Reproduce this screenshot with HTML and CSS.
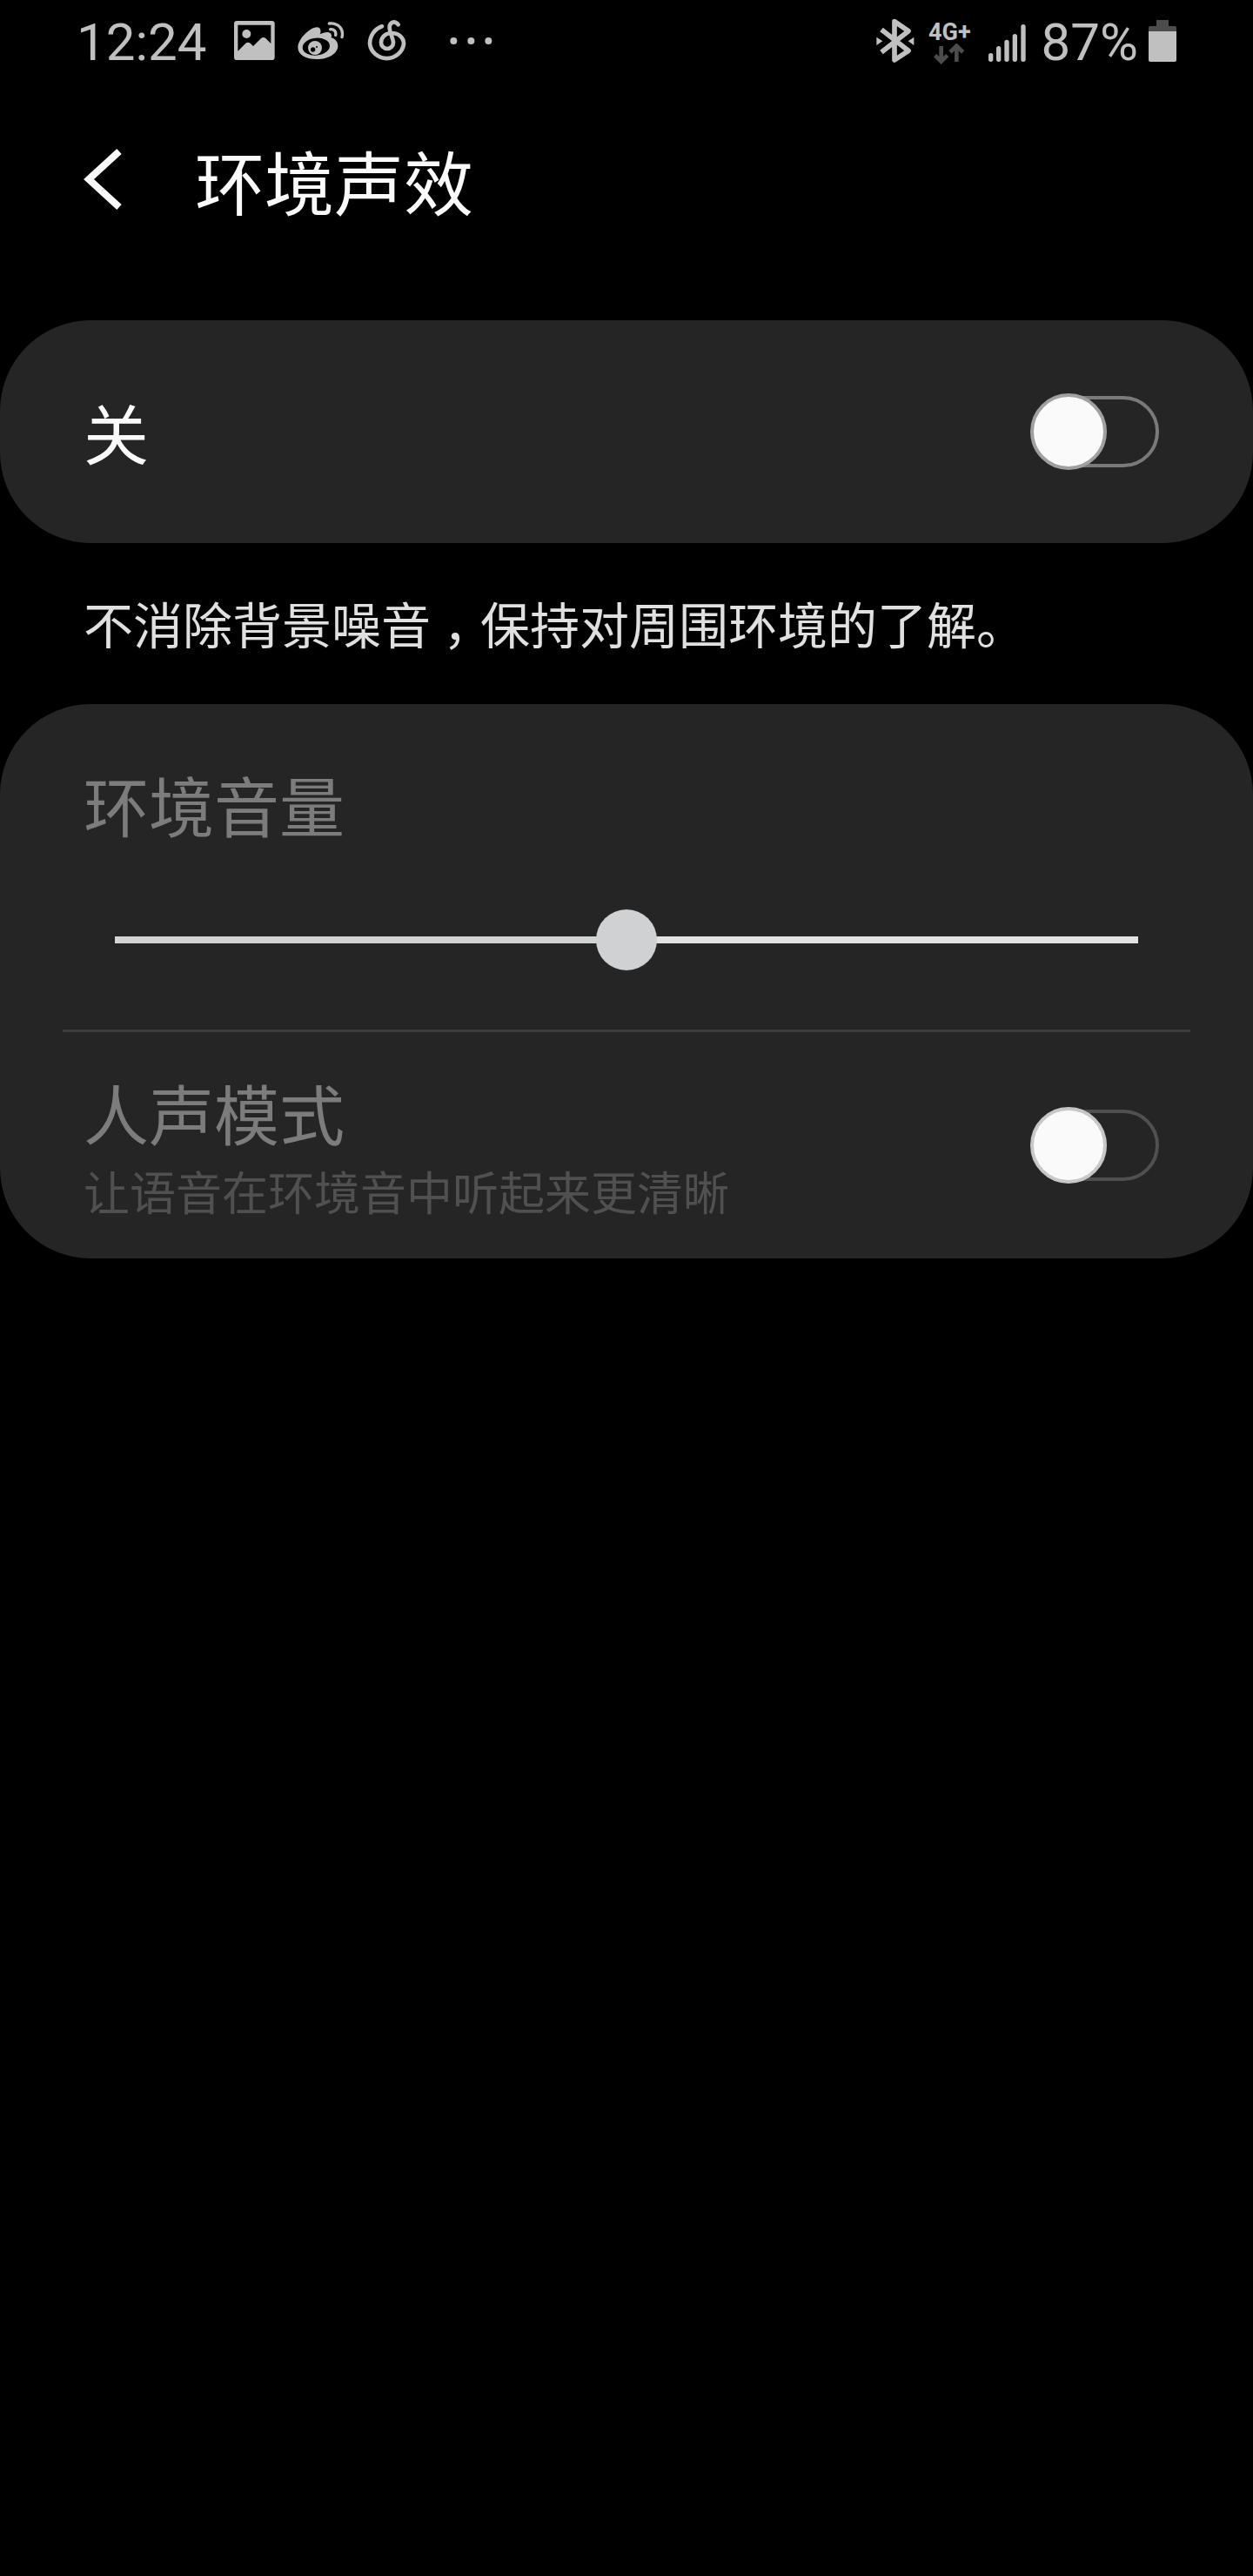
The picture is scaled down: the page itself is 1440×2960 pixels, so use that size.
FILE: index.html
```html
<!DOCTYPE html>
<html lang="zh-CN">

<head>
    <meta charset="UTF-8" />
    <meta name="viewport" content="width=device-width, initial-scale=1.0" />
    <title>环境声效</title>
    <link rel="stylesheet" href="styles.css">
</head>

<body>
    <div class="status-bar">
        <span class="time">12:24</span>
        <div class="notifications">
            <!-- 图片 -->
            <svg width="47" height="56" viewBox="569 63 141 168">
                <path fill="#c0c0c0" fill-rule="evenodd" d="M579 72H699Q709 72 709 82V197Q709 207 699 207H579Q569 207 569 197V82Q569 72 579 72ZM582 86V176L609 149Q617 143 625 149L635 159L662 132Q670 126 678 132L696 150V86Z" />
                <circle cx="612" cy="117" r="15" fill="#c0c0c0" />
            </svg>
            <!-- 微博 -->
            <svg width="54" height="56" viewBox="786 63 162 168">
                <path fill="#c0c0c0" d="M787 164C787 142 808 116 830 102C845 93 862 89 865 103Q867 111 863 118C876 111 894 107 901 116Q905 122 902 130C916 134 925 144 925 158C925 184 892 204 852 204C815 204 787 188 787 164Z" />
                <ellipse cx="850" cy="161" rx="47" ry="30" transform="rotate(-6 850 161)" fill="#000" />
                <circle cx="846" cy="165" r="24" fill="#c0c0c0" />
                <circle cx="839" cy="171" r="8" fill="#000" />
                <circle cx="852" cy="162" r="3" fill="#000" />
                <path fill="none" stroke="#c0c0c0" stroke-width="10" stroke-linecap="round" d="M895 81C926 78 946 100 939 128M899 101C912 100 920 109 917 121" />
            </svg>
            <!-- 网易云音乐 -->
            <svg width="45" height="56" viewBox="1028 63 135 168">
                <path fill="none" stroke="#c0c0c0" stroke-width="14" stroke-linecap="round" d="M1079 91C1052 100 1037 125 1037 151A59 58 0 0 0 1154 151C1154 130 1137 113 1110 114C1088 115 1076 131 1076 147A21 21 0 0 0 1118 147C1118 134 1105 110 1105 95C1105 76 1122 70 1135 85" />
            </svg>
            <svg class="more" width="49" height="56" viewBox="1310 63 147 168">
                <g fill="#c0c0c0">
                    <circle cx="1323" cy="141" r="12" />
                    <circle cx="1383" cy="141" r="12" />
                    <circle cx="1443" cy="141" r="12" />
                </g>
            </svg>
        </div>
        <div class="system">
            <!-- 蓝牙 -->
            <svg width="44" height="56" viewBox="80 63 132 168">
                <path fill="none" stroke="#c0c0c0" stroke-width="17" stroke-linejoin="round" d="M98 102L191 175L143 207V74L191 107L98 180" />
                <path fill="#c0c0c0" d="M81 128L102 142L81 156ZM210 128V156L190 142Z" />
            </svg>
            <div class="network">
                <span>4G+</span>
                <svg width="36" height="24" viewBox="279 150 108 72">
                    <path fill="none" stroke="#4c4c4c" stroke-width="14" d="M305 159V210M284 191L305 212L326 191M358 213V160M336 180L358 158L380 180" />
                </svg>
            </div>
            <svg class="signal" width="43" height="56" viewBox="465 63 129 168">
                <path fill="none" stroke="#c0c0c0" stroke-width="16" stroke-linecap="round" d="M473 191V205M500 167V205M528 145V205M556 125V205M585 92V205" />
            </svg>
            <span class="percent">87%</span>
            <svg class="battery" width="32" height="56" viewBox="1020 63 96 168">
                <path fill="#4c4c4c" d="M1047 69H1089V90H1110Q1116 90 1116 96V108H1020V96Q1020 90 1026 90H1047Z" />
                <path fill="#c0c0c0" d="M1020 108H1116V207Q1116 213 1110 213H1026Q1020 213 1020 207Z" />
            </svg>
        </div>
    </div>

    <header>
        <button type="button" class="back" aria-label="返回">
            <svg width="44" height="72" viewBox="0 0 44 72">
                <path fill="none" stroke="#fafafa" stroke-width="8" d="M41 4L6 36L41 68" />
            </svg>
        </button>
        <h1>环境声效</h1>
    </header>

    <main>
        <section class="card">
            <div class="row">
                <label for="ambient" class="label" id="ambientText">关</label>
                <input type="checkbox" class="switch" id="ambient" />
            </div>
        </section>

        <p class="description">不消除背景噪音<span class="comma">，</span>保持对周围环境的了解。</p>

        <section class="card disabled">
            <div class="volume">
                <label for="volume" class="label">环境音量</label>
                <input type="range" id="volume" min="0" max="2" value="1" disabled />
            </div>
            <hr />
            <div class="row voice">
                <div class="text">
                    <label for="voice" class="label">人声模式</label>
                    <p class="hint">让语音在环境音中听起来更清晰</p>
                </div>
                <input type="checkbox" class="switch" id="voice" disabled />
            </div>
        </section>
    </main>

    <script>
        const ambient = document.getElementById('ambient');
        const ambientText = document.getElementById('ambientText');
        const volume = document.getElementById('volume');
        const voice = document.getElementById('voice');
        const options = document.querySelector('.card.disabled');

        // 打开环境声效后才能调整下面的选项
        ambient.addEventListener('change', function () {
            ambientText.innerText = ambient.checked ? '开' : '关';
            volume.disabled = !ambient.checked;
            voice.disabled = !ambient.checked;
            options.classList.toggle('disabled', !ambient.checked);
        });
    </script>
</body>

</html>
```
FILE: styles.css
```css
*,
*::before,
*::after {
    box-sizing: border-box;
}

body {
    margin: 0;
    background-color: #000;
    color: #fafafa;
    font-family: "Noto Sans CJK SC", sans-serif;
}

svg {
    display: block;
}

/* 状态栏 */
.status-bar {
    display: flex;
    align-items: center;
    height: 98px;
    padding: 0 88px;
    color: #c0c0c0;
    font-family: Roboto, sans-serif;
    font-size: 60px;
    line-height: 70px;
}

.notifications {
    display: flex;
    gap: 26px;
    margin-left: 32px;
}

.more {
    margin-left: 24px;
}

.system {
    display: flex;
    align-items: center;
    margin-left: auto;
}

.network {
    display: flex;
    flex-direction: column;
    align-items: center;
    margin: 0 20px 0 16px;
    font-size: 27px;
    font-weight: bold;
    line-height: 26px;
}

.signal {
    margin-right: 18px;
}

.battery {
    margin-left: 12px;
}

/* 标题 */
header {
    display: flex;
    align-items: center;
    gap: 84px;
    height: 216px;
    padding: 0 96px;
}

.back {
    padding: 0;
    border: none;
    background: none;
    cursor: pointer;
}

h1 {
    margin: 0;
    font-size: 80px;
    font-weight: normal;
    line-height: 120px;
}

main {
    padding-top: 54px;
}

/* 卡片 */
.card {
    border-radius: 104px;
    background-color: #252525;
}

.row {
    display: flex;
    align-items: center;
    justify-content: space-between;
    min-height: 256px;
    padding: 0 108px 0 96px;
}

.label {
    display: block;
    font-size: 75px;
    line-height: 90px;
}

.disabled .label {
    color: #7c7c7c;
}

.description {
    margin: 0;
    padding: 46px 96px 49px;
    color: #e0e0e0;
    font-size: 57px;
    line-height: 90px;
}

/* 逗号在字格内居中 */
.comma {
    display: inline-block;
    width: 57px;
    font-feature-settings: "halt";
    text-align: center;
}

.volume {
    padding: 70px 96px 68px;
}

hr {
    height: 3px;
    margin: 0 72px;
    border: none;
    background-color: #3c3c3c;
}

.voice {
    min-height: 260px;
}

.text {
    padding-top: 14px;
}

.hint {
    margin: 0;
    color: #505050;
    font-size: 53px;
    line-height: 90px;
}

/* 开关 */
.switch {
    appearance: none;
    position: relative;
    flex: none;
    width: 148px;
    height: 88px;
    margin: 0;
    cursor: pointer;
}

.switch::before {
    content: "";
    position: absolute;
    inset: 3px 0 3px 3px;
    border: 4px solid #7a7a7a;
    border-radius: 41px;
}

.switch::after {
    content: "";
    position: absolute;
    top: 0;
    left: 0;
    width: 88px;
    height: 88px;
    border: 4px solid #a0a0a0;
    border-radius: 50%;
    background-color: #fafafa;
}

.switch:checked::after {
    left: auto;
    right: 0;
}

.switch:disabled::before {
    border-color: #505050;
}

.switch:disabled::after {
    border-color: #c8c8c8;
}

/* 音量滑块 */
input[type="range"] {
    appearance: none;
    display: block;
    width: calc(100% - 72px);
    height: 70px;
    margin: 76px 36px 0;
    background: none;
}

input[type="range"]::-webkit-slider-runnable-track {
    height: 8px;
    background: linear-gradient(to right, #d2d4d4 50%, #e2e2e0 50%);
}

input[type="range"]::-webkit-slider-thumb {
    appearance: none;
    width: 70px;
    height: 70px;
    margin-top: -31px;
    border-radius: 50%;
    background-color: #d0d1d3;
}
```
